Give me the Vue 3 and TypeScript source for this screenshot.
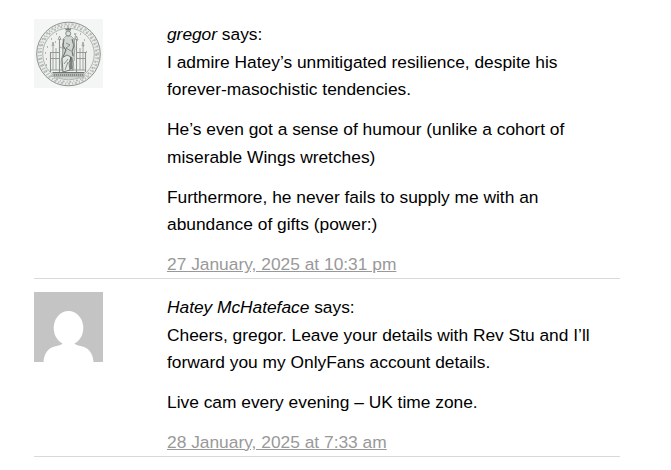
<script setup lang="ts">
interface Comment {
  id: number
  author: string
  avatar: 'seal' | 'silhouette'
  paragraphs: string[][]
  date: string
}

const comments: Comment[] = [
  {
    id: 1,
    author: 'gregor',
    avatar: 'seal',
    paragraphs: [
      ['I admire Hatey’s unmitigated resilience, despite his', 'forever-masochistic tendencies.'],
      ['He’s even got a sense of humour (unlike a cohort of', 'miserable Wings wretches)'],
      ['Furthermore, he never fails to supply me with an', 'abundance of gifts (power:)'],
    ],
    date: '27 January, 2025 at 10:31 pm',
  },
  {
    id: 2,
    author: 'Hatey McHateface',
    avatar: 'silhouette',
    paragraphs: [
      ['Cheers, gregor. Leave your details with Rev Stu and I’ll', 'forward you my OnlyFans account details.'],
      ['Live cam every evening – UK time zone.'],
    ],
    date: '28 January, 2025 at 7:33 am',
  },
]
</script>

<template>
  <ol class="comments">
    <li v-for="comment in comments" :key="comment.id" class="comment">
      <svg v-if="comment.avatar === 'seal'" class="avatar" viewBox="0 0 69 69">
        <rect width="69" height="69" fill="#f3f6f4" />
        <g fill="none">
          <circle cx="34.5" cy="35" r="31.8" fill="#eceeec" stroke="#8d928e" stroke-width="1" />
          <circle cx="34.500" cy="35" r="29.800" stroke="#b9beba" stroke-width="2" stroke-dasharray="1.300 1.900 2.200 1.600" />
          <circle cx="34.500" cy="35" r="27.800" stroke="#b3b8b4" stroke-width="2" stroke-dasharray="2 1.700 1 2.100" />
          <circle cx="34.500" cy="35" r="25.800" fill="#eff1ef" stroke="#a0a5a1" stroke-width=".8" />
        </g>
        <!-- diapered background -->
        <path
          d="M17 20h1m4-5h1m3 5h1m-6 3h1m-9 5h1m-3 6h1m0 6h1m-1 6h1m27-31h1m5 0h1m-4 6h1m6 0h1m-2 6h1m2 6h1m-2 6h1m-1 6h1"
          stroke="#9da29e"
          stroke-width="1.5"
        />
        <!-- throne -->
        <g fill="none" stroke="#8d938f">
          <path d="M16.500 53V33M25.500 53V20M42.500 53V20M51.500 53V33" stroke-width="1.1" />
          <path d="M19 51V26m3 25V29m24 22V29m3 22V26" stroke-width=".8" />
          <path d="M16 33.500h10M42 33.500h10M16 39.500h10M42 39.500h10M16 51h36" stroke-width=".9" />
          <path d="M18 27l1-4 1 4m4-6l1.500-4 1.500 4m14 0l1.500-4 1.500 4m4 6l1-4 1 4" stroke-width=".8" />
          <path d="M28.500 24v18m12-18v18" stroke="#b5bab6" />
        </g>
        <!-- seated figure -->
        <path d="M29 20l3-3h5l3 3 1 10-2 9 1 12-12 1-1-9 2-10z" fill="#d2d6d2" stroke="#828984" stroke-width=".6" />
        <path d="M30 20l-1 7 3 4-3 7M38 20l2 7-2 5 1 5" fill="none" stroke="#6b736d" stroke-width="1.100" />
        <path d="M28 39l5-3 4 2-2 6 1 7-7 2z" fill="#e5e8e5" stroke="#5c645e" stroke-width=".8" />
        <path d="M38 39l1 6-1 7m-8-7l4-5m-3 11l3-8M32 24l4 2-4 3 5 3" fill="none" stroke="#747d76" stroke-width=".8" />
        <path d="M37 38v12" stroke="#454d47" stroke-width="1.200" />
        <circle cx="34.200" cy="14.500" r="2.500" fill="#dce0dc" stroke="#6c746e" stroke-width=".8" />
        <path d="M31.500 11.500V9l1.500 1 1-2 1.500 2 1.500-1v2.500z" fill="#7b827d" />
        <path d="M39 28l3-14M26 28l4 2" stroke="#8f9690" stroke-width=".8" />
        <!-- footstool -->
        <path d="M19 53.500h31l1 4.500H18z" fill="#b0b5b1" />
        <path d="M18.500 53.500h32" stroke="#6e7570" />
        <path d="M20 56h29" stroke="#777e79" stroke-width="1.500" stroke-dasharray="1 1" />
        <path d="M20 59h29" stroke="#b4b9b5" />
      </svg>
      <svg v-else class="avatar silhouette" viewBox="0 0 69 70">
        <rect width="69" height="70" fill="#c4c4c4" />
        <ellipse cx="34.5" cy="36" rx="14.8" ry="17" fill="#fff" />
        <path d="M9.500 70c.5-9 5-14.500 13-16 3.500-.6 5.500-1.500 6.500-3h11c1 1.500 3 2.400 6.500 3 8 1.500 12.500 7 13 16z" fill="#fff" />
      </svg>
      <div class="body">
        <div class="author"><cite>{{ comment.author }}</cite> says:</div>
        <p v-for="(lines, i) in comment.paragraphs" :key="i">
          <span v-for="line in lines" :key="line" class="line">{{ line }}</span>
        </p>
        <a class="date" href="#">{{ comment.date }}</a>
      </div>
    </li>
  </ol>
</template>

<style>
body {
  background: #fff;
}
</style>

<style scoped>
.comments {
  margin: 0;
  padding: 6px 51px 0 34px;
  list-style: none;
  color: #000;
  font-family: 'Liberation Sans', Arial, sans-serif;
  font-size: 17.36px;
  line-height: 27.6px;
}

.comment {
  display: flex;
  gap: 64px;
  padding-top: 13px;
  border-bottom: 1px solid #d9d9d9;
}

.avatar {
  flex: none;
  width: 69px;
  height: 69px;
}

.avatar.silhouette {
  height: 70px;
}

.body {
  padding-top: 2.1px;
  margin-bottom: -0.9px;
  white-space: nowrap;
}

cite {
  letter-spacing: -0.03px;
}

p {
  margin: 0 0 12.3px;
}

.line {
  display: block;
}

.date {
  display: block;
  width: fit-content;
  color: #999;
  text-decoration: underline;
}
</style>
